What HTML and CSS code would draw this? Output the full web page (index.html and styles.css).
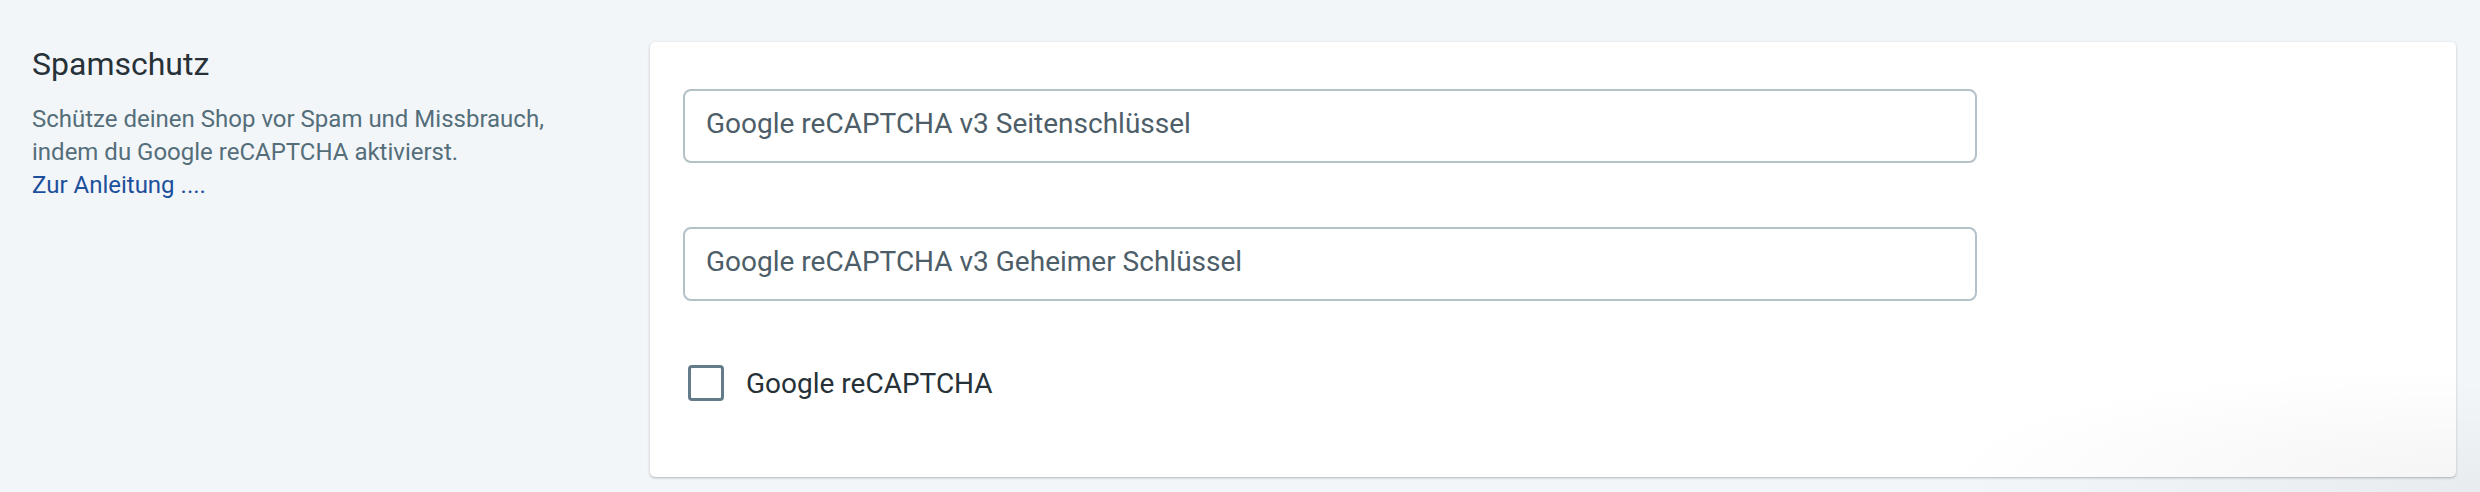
FILE: index.html
```html
<!DOCTYPE html>
<html lang="de">
<head>
<meta charset="utf-8">
<title>Spamschutz</title>
<link rel="stylesheet" href="styles.css">
</head>
<body>
<main class="page">
  <section class="settings-row">
    <div class="intro">
      <h2 class="intro-title">Spamschutz</h2>
      <p class="intro-text">Schütze deinen Shop vor Spam und Missbrauch, indem du Google reCAPTCHA aktivierst.<br><a class="intro-link" href="#">Zur Anleitung ....</a></p>
    </div>
    <div class="card">
      <input class="field" type="text" placeholder="Google reCAPTCHA v3 Seitenschlüssel">
      <input class="field" type="text" placeholder="Google reCAPTCHA v3 Geheimer Schlüssel">
      <label class="check">
        <input class="check-input" type="checkbox">
        <span class="check-box"></span>
        <span class="check-label">Google reCAPTCHA</span>
      </label>
    </div>
  </section>
</main>
</body>
</html>
```

FILE: styles.css
```css
* { box-sizing: border-box; }

html, body {
  margin: 0;
  padding: 0;
  font-family: Roboto, "Liberation Sans", Arial, sans-serif;
}

body {
  background-color: #f3f6f9;
  background-image: radial-gradient(520px 110px at 100% 100%, rgba(0, 0, 0, 0.045), rgba(0, 0, 0, 0));
  min-height: 492px;
}

.page {
  padding: 42px 24px 15px 0;
}

.settings-row {
  display: flex;
  align-items: flex-start;
}

.intro {
  width: 650px;
  flex: 0 0 650px;
  padding: 0 48px 0 32px;
}

.intro-title {
  margin: 3px 0 0;
  font-size: 32px;
  line-height: 38px;
  font-weight: 400;
  color: #263238;
}

.intro-text {
  margin: 20px 0 0;
  font-size: 24px;
  line-height: 33px;
  color: #546e7a;
}

.intro-link {
  color: #1c4f9c;
  text-decoration: none;
}

.card {
  flex: 1;
  display: flex;
  flex-direction: column;
  gap: 64px;
  padding: 47px 33px 76px 33px;
  background-color: #fff;
  background-image: radial-gradient(520px 110px at 100% 100%, rgba(0, 0, 0, 0.04), rgba(0, 0, 0, 0));
  border-radius: 5px;
  box-shadow: 0 1px 3px rgba(0, 0, 0, 0.22), 0 1px 1px rgba(0, 0, 0, 0.06);
}

.field {
  display: block;
  width: 1294px;
  height: 74px;
  margin: 0;
  padding: 12px 21px 17px;
  border: 2px solid #b4c1c8;
  border-radius: 8px;
  background: #fff;
  font-family: Roboto, "Liberation Sans", Arial, sans-serif;
  font-size: 28px;
  color: #37474f;
  outline: none;
}

.field::placeholder {
  color: #4d5e69;
  opacity: 1;
}

.check {
  display: flex;
  align-items: center;
  height: 36px;
  padding-left: 5px;
  cursor: pointer;
}

.check-input {
  position: absolute;
  opacity: 0;
  width: 0;
  height: 0;
  margin: 0;
}

.check-box {
  width: 36px;
  height: 36px;
  flex: 0 0 36px;
  border: 3px solid #647b89;
  border-radius: 4px;
  background: #fff;
}

.check-label {
  margin-left: 22px;
  font-size: 28px;
  color: #263238;
}
```
